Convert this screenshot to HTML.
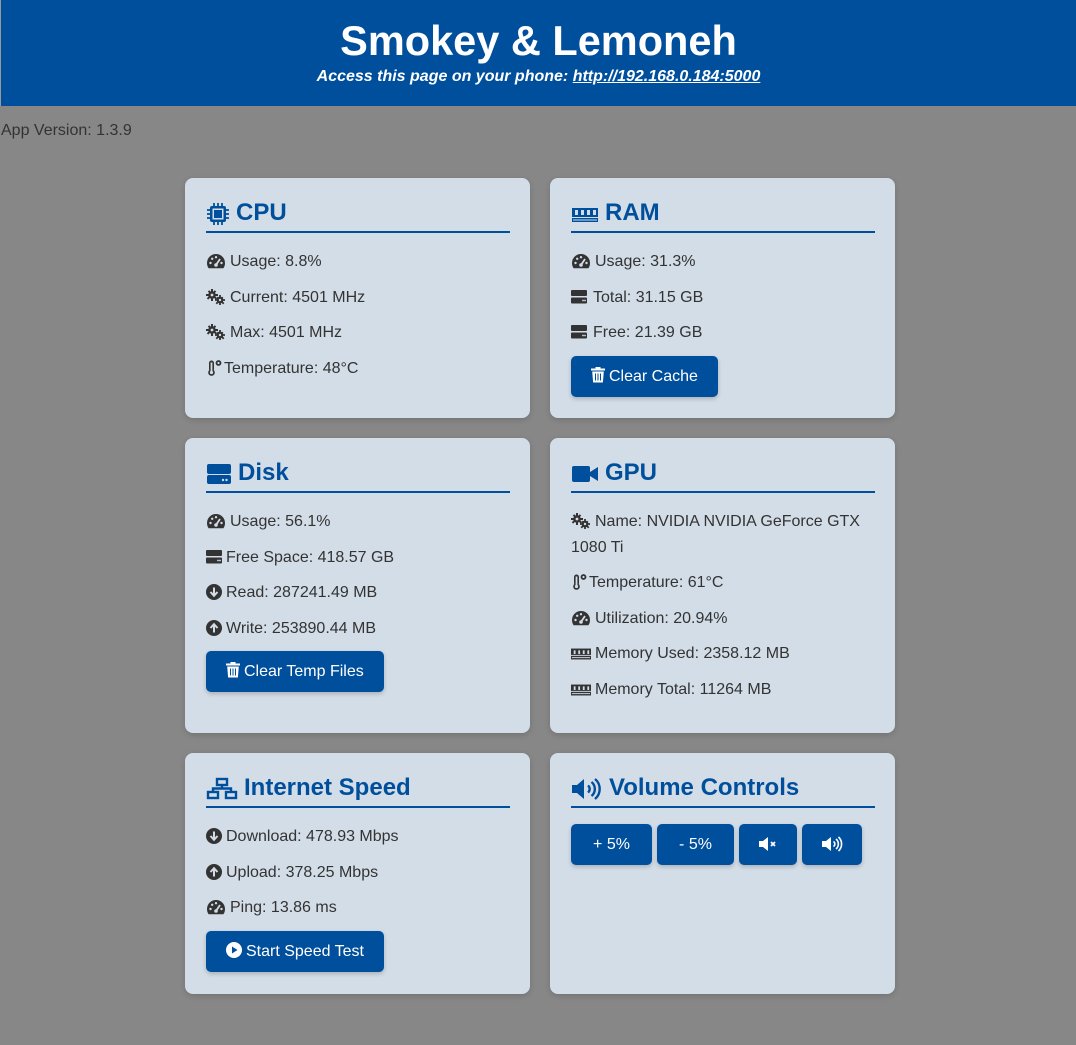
<!DOCTYPE html>
<html><head><meta charset="utf-8"><style>
*{box-sizing:border-box}
body{margin:0;background:#878787;font-family:"Liberation Sans",Arial,sans-serif;color:#333;width:1076px;height:1045px;overflow:hidden;position:relative}
header{position:absolute;left:0;top:0;width:1076px;height:106px;background:#004f9c;color:#fff;text-align:center;border-left:1px solid #999}
header h1{margin:0;position:absolute;top:18px;width:100%;font-size:41.5px;line-height:46px;font-weight:bold}
header p{margin:0;position:absolute;top:67px;width:100%;font-size:16px;line-height:20px;font-weight:bold;font-style:italic}
header a{color:#fff;text-decoration:underline}
.ver{position:absolute;left:1px;top:122px;font-size:16px;line-height:18px;color:#333}
.card{position:absolute;width:345px;background:#d3dde7;border-radius:8px;padding:0 21px 0 21px;box-shadow:0 2px 6px rgba(0,0,0,.15)}
.card h2{margin:0;margin-top:20px;height:35px;border-bottom:2px solid #004f9c;color:#004f9c;font-size:24px;line-height:28px;padding-top:1px;font-weight:bold;display:flex;gap:6px;align-items:flex-start;margin-right:-1px}
.card h2 svg{margin-top:3px}
.row{margin:0;font-size:16px;line-height:25.6px;display:block}
.rows{padding-top:16px}
.row+.row{margin-top:10px}
.row svg{vertical-align:-3px;margin-right:4px}
.btn{display:inline-block;background:#004f9c;color:#fff;font-size:16px;line-height:21px;padding:10px 20px;border-radius:5px;margin-top:10px;box-shadow:0 2px 4px rgba(0,0,0,.2)}
.btn svg{vertical-align:-2px;margin-right:4px}
.vb{display:inline-block;background:#004f9c;color:#fff;font-size:16px;height:41px;line-height:41px;text-align:center;border-radius:5px;margin-right:5px;box-shadow:0 2px 4px rgba(0,0,0,.2);vertical-align:top}
</style></head><body>
<header><h1>Smokey &amp; Lemoneh</h1><p>Access this page on your phone: <a>http://192.168.0.184:5000</a></p></header>
<div class="ver">App Version: 1.3.9</div>

<svg width="0" height="0" style="position:absolute">
<defs>
<symbol id="g" viewBox="0 0 20 16"><path d="M10 1a9 9 0 0 0-9 9c0 2 .6 3.8 1.6 5.3h14.8A9 9 0 0 0 19 10a9 9 0 0 0-9-9z" fill="#333"/><circle cx="4.5" cy="10" r="1.2" fill="#d3dde7"/><circle cx="6.2" cy="5.8" r="1.2" fill="#d3dde7"/><circle cx="10" cy="4.2" r="1.2" fill="#d3dde7"/><circle cx="15.5" cy="10" r="1.2" fill="#d3dde7"/><path d="M10 12l4-6" stroke="#d3dde7" stroke-width="1.8"/><circle cx="10" cy="12" r="1.8" fill="#d3dde7"/></symbol>
<symbol id="c" viewBox="0 0 20 16"><g fill="#333"><circle cx="6" cy="6" r="3.8"/><path d="M5 0h2v12H5zM0 5h12v2H0zM1.8 2.6l1.4-1.4 8 8-1.4 1.4zM10.2 2.6L8.8 1.2l-8 8 1.4 1.4z"/><circle cx="14" cy="11" r="3.3"/><path d="M13.1 6h1.8v10h-1.8zM9 10.1h10v1.8H9zM10.6 8.9l1.3-1.3 6.5 6.5-1.3 1.3zM17.4 8.9l-1.3-1.3-6.5 6.5 1.3 1.3z"/></g><circle cx="6" cy="6" r="1.4" fill="#d3dde7"/><circle cx="14" cy="11" r="1.2" fill="#d3dde7"/></symbol>
<symbol id="t" viewBox="0 0 16 16"><rect x="3" y="0.5" width="5" height="11" rx="2.5" fill="#333"/><circle cx="5.5" cy="12.5" r="3.3" fill="#333"/><rect x="4.6" y="2.5" width="1.8" height="9" fill="#d3dde7"/><circle cx="5.5" cy="12.5" r="1.6" fill="#d3dde7"/><circle cx="12.5" cy="3" r="2" fill="none" stroke="#333" stroke-width="1.8"/></symbol>
<symbol id="s" viewBox="0 0 16 16"><rect x="0" y="1" width="16" height="6" rx="1" fill="#333"/><rect x="0" y="8.5" width="16" height="6" rx="1" fill="#333"/><circle cx="12" cy="11.5" r=".9" fill="#d3dde7"/><circle cx="14" cy="11.5" r=".9" fill="#d3dde7"/></symbol>
<symbol id="d" viewBox="0 0 16 16"><circle cx="8" cy="8" r="8" fill="#333"/><path d="M8 3.5v8M4.5 8l3.5 3.8L11.5 8" stroke="#d3dde7" stroke-width="2" fill="none"/></symbol>
<symbol id="u" viewBox="0 0 16 16"><circle cx="8" cy="8" r="8" fill="#333"/><path d="M8 12.5v-8M4.5 8L8 4.2 11.5 8" stroke="#d3dde7" stroke-width="2" fill="none"/></symbol>
<symbol id="m" viewBox="0 0 22 14"><rect x="0" y="1" width="22" height="7" fill="#333"/><rect x="0" y="9" width="22" height="4" fill="#333"/><rect x="3" y="3" width="2" height="4" fill="#d3dde7"/><rect x="8" y="3" width="2" height="4" fill="#d3dde7"/><rect x="13" y="3" width="2" height="4" fill="#d3dde7"/><rect x="18" y="3" width="2" height="4" fill="#d3dde7"/><rect x="1" y="10.5" width="20" height="1" fill="#d3dde7"/></symbol>
<symbol id="tr" viewBox="0 0 14 16"><rect x="0" y="1.5" width="14" height="2" fill="#fff"/><rect x="4.5" y="0" width="5" height="2" fill="#fff"/><path d="M1.2 4.5h11.6l-.9 11H2.1z" fill="#fff"/><path d="M4.5 6.5v7M7 6.5v7M9.5 6.5v7" stroke="#004f9c" stroke-width="1"/></symbol>
</defs></svg>

<div class="card" style="left:185px;top:178px;height:240px">
<h2><svg width="24" height="24" viewBox="0 0 24 24"><g stroke="#004f9c" stroke-width="1.8"><path d="M8 1v4M12 1v4M16 1v4M8 19v4M12 19v4M16 19v4M1 8h4M1 12h4M1 16h4M19 8h4M19 12h4M19 16h4"/></g><rect x="4" y="4" width="16" height="16" rx="2" fill="#004f9c"/><rect x="6.5" y="6.5" width="11" height="11" fill="#d3dde7"/><rect x="8" y="8" width="8" height="8" fill="#004f9c"/></svg>CPU</h2>
<div class="rows">
<div class="row"><svg width="20" height="16"><use href="#g"/></svg>Usage: 8.8%</div>
<div class="row"><svg width="20" height="16"><use href="#c"/></svg>Current: 4501 MHz</div>
<div class="row"><svg width="20" height="16"><use href="#c"/></svg>Max: 4501 MHz</div>
<div class="row"><svg width="16" height="16" style="margin-right:2px"><use href="#t"/></svg>Temperature: 48°C</div>
</div></div>

<div class="card" style="left:550px;top:178px;height:240px">
<h2><svg width="28" height="24" viewBox="0 0 28 24"><rect x="1" y="6" width="26" height="9" fill="#004f9c"/><rect x="1" y="16" width="26" height="4" fill="#004f9c"/><rect x="4" y="8" width="3" height="5" fill="#d3dde7"/><rect x="10" y="8" width="3" height="5" fill="#d3dde7"/><rect x="16" y="8" width="3" height="5" fill="#d3dde7"/><rect x="22" y="8" width="3" height="5" fill="#d3dde7"/><rect x="2" y="17.5" width="24" height="1" fill="#d3dde7"/></svg>RAM</h2>
<div class="rows">
<div class="row"><svg width="20" height="16"><use href="#g"/></svg>Usage: 31.3%</div>
<div class="row"><svg width="16" height="16" style="margin-right:6px"><use href="#s"/></svg>Total: 31.15 GB</div>
<div class="row"><svg width="16" height="16" style="margin-right:6px"><use href="#s"/></svg>Free: 21.39 GB</div>
</div>
<div class="btn"><svg width="14" height="16"><use href="#tr"/></svg>Clear Cache</div>
</div>

<div class="card" style="left:185px;top:438px;height:295px">
<h2><svg width="26" height="24" viewBox="0 0 26 24"><rect x="1" y="2" width="24" height="10" rx="2" fill="#004f9c"/><rect x="1" y="13" width="24" height="9" rx="2" fill="#004f9c"/><circle cx="17" cy="18" r="1.2" fill="#d3dde7"/><circle cx="20.5" cy="18" r="1.2" fill="#d3dde7"/></svg>Disk</h2>
<div class="rows">
<div class="row"><svg width="20" height="16"><use href="#g"/></svg>Usage: 56.1%</div>
<div class="row"><svg width="16" height="16" style="margin-right:4px"><use href="#s"/></svg>Free Space: 418.57 GB</div>
<div class="row"><svg width="16" height="16" style="margin-right:4px"><use href="#d"/></svg>Read: 287241.49 MB</div>
<div class="row"><svg width="16" height="16" style="margin-right:4px"><use href="#u"/></svg>Write: 253890.44 MB</div>
</div>
<div class="btn"><svg width="14" height="16"><use href="#tr"/></svg>Clear Temp Files</div>
</div>

<div class="card" style="left:550px;top:438px;height:295px">
<h2><svg width="28" height="24" viewBox="0 0 28 24"><rect x="1" y="4" width="18" height="16" rx="2" fill="#004f9c"/><path d="M19 10l8-5v14l-8-5z" fill="#004f9c"/></svg>GPU</h2>
<div class="rows">
<div class="row"><svg width="20" height="16"><use href="#c"/></svg>Name: NVIDIA NVIDIA GeForce GTX 1080 Ti</div>
<div class="row"><svg width="16" height="16" style="margin-right:2px"><use href="#t"/></svg>Temperature: 61°C</div>
<div class="row"><svg width="20" height="16"><use href="#g"/></svg>Utilization: 20.94%</div>
<div class="row"><svg width="20" height="14"><use href="#m"/></svg>Memory Used: 2358.12 MB</div>
<div class="row"><svg width="20" height="14"><use href="#m"/></svg>Memory Total: 11264 MB</div>
</div></div>

<div class="card" style="left:185px;top:753px;height:241px">
<h2><svg width="32" height="24" viewBox="0 0 32 24"><g fill="none" stroke="#004f9c" stroke-width="2.4"><rect x="11" y="2" width="10" height="6"/><rect x="2" y="15" width="10" height="6"/><rect x="20" y="15" width="10" height="6"/><path d="M16 8v3.5M7 15v-3.5h18V15"/></g></svg>Internet Speed</h2>
<div class="rows">
<div class="row"><svg width="16" height="16" style="margin-right:4px"><use href="#d"/></svg>Download: 478.93 Mbps</div>
<div class="row"><svg width="16" height="16" style="margin-right:4px"><use href="#u"/></svg>Upload: 378.25 Mbps</div>
<div class="row"><svg width="20" height="16"><use href="#g"/></svg>Ping: 13.86 ms</div>
</div>
<div class="btn"><svg width="16" height="16" viewBox="0 0 16 16"><circle cx="8" cy="8" r="8" fill="#fff"/><path d="M6 4.5v7l5.5-3.5z" fill="#004f9c"/></svg>Start Speed Test</div>
</div>

<div class="card" style="left:550px;top:753px;height:241px">
<h2><svg width="32" height="24" viewBox="0 0 32 24"><path d="M1 8h5l7-6v20l-7-6H1z" fill="#004f9c"/><g fill="none" stroke="#004f9c" stroke-width="2.4"><path d="M17 8.5a4.5 4.5 0 0 1 0 7"/><path d="M20.5 5a9 9 0 0 1 0 14"/><path d="M24 2a13 13 0 0 1 0 20"/></g></svg>Volume Controls</h2>
<div style="padding-top:16px">
<div class="vb" style="width:81px">+ 5%</div><div class="vb" style="width:77px">- 5%</div><div class="vb" style="width:58px"><svg width="20" height="16" viewBox="0 0 20 16" style="vertical-align:-3px"><path d="M1 5h4l5-4v14l-5-4H1z" fill="#fff"/><path d="M13 6l4 4M17 6l-4 4" stroke="#fff" stroke-width="1.8"/></svg></div><div class="vb" style="width:60px"><svg width="22" height="16" viewBox="0 0 22 16" style="vertical-align:-3px"><path d="M1 5h4l5-4v14l-5-4H1z" fill="#fff"/><g fill="none" stroke="#fff" stroke-width="1.6"><path d="M12.5 5.5a3 3 0 0 1 0 5"/><path d="M15 3a6.5 6.5 0 0 1 0 10"/><path d="M17.5 1a9.5 9.5 0 0 1 0 14"/></g></svg></div>
</div></div>
</body></html>
